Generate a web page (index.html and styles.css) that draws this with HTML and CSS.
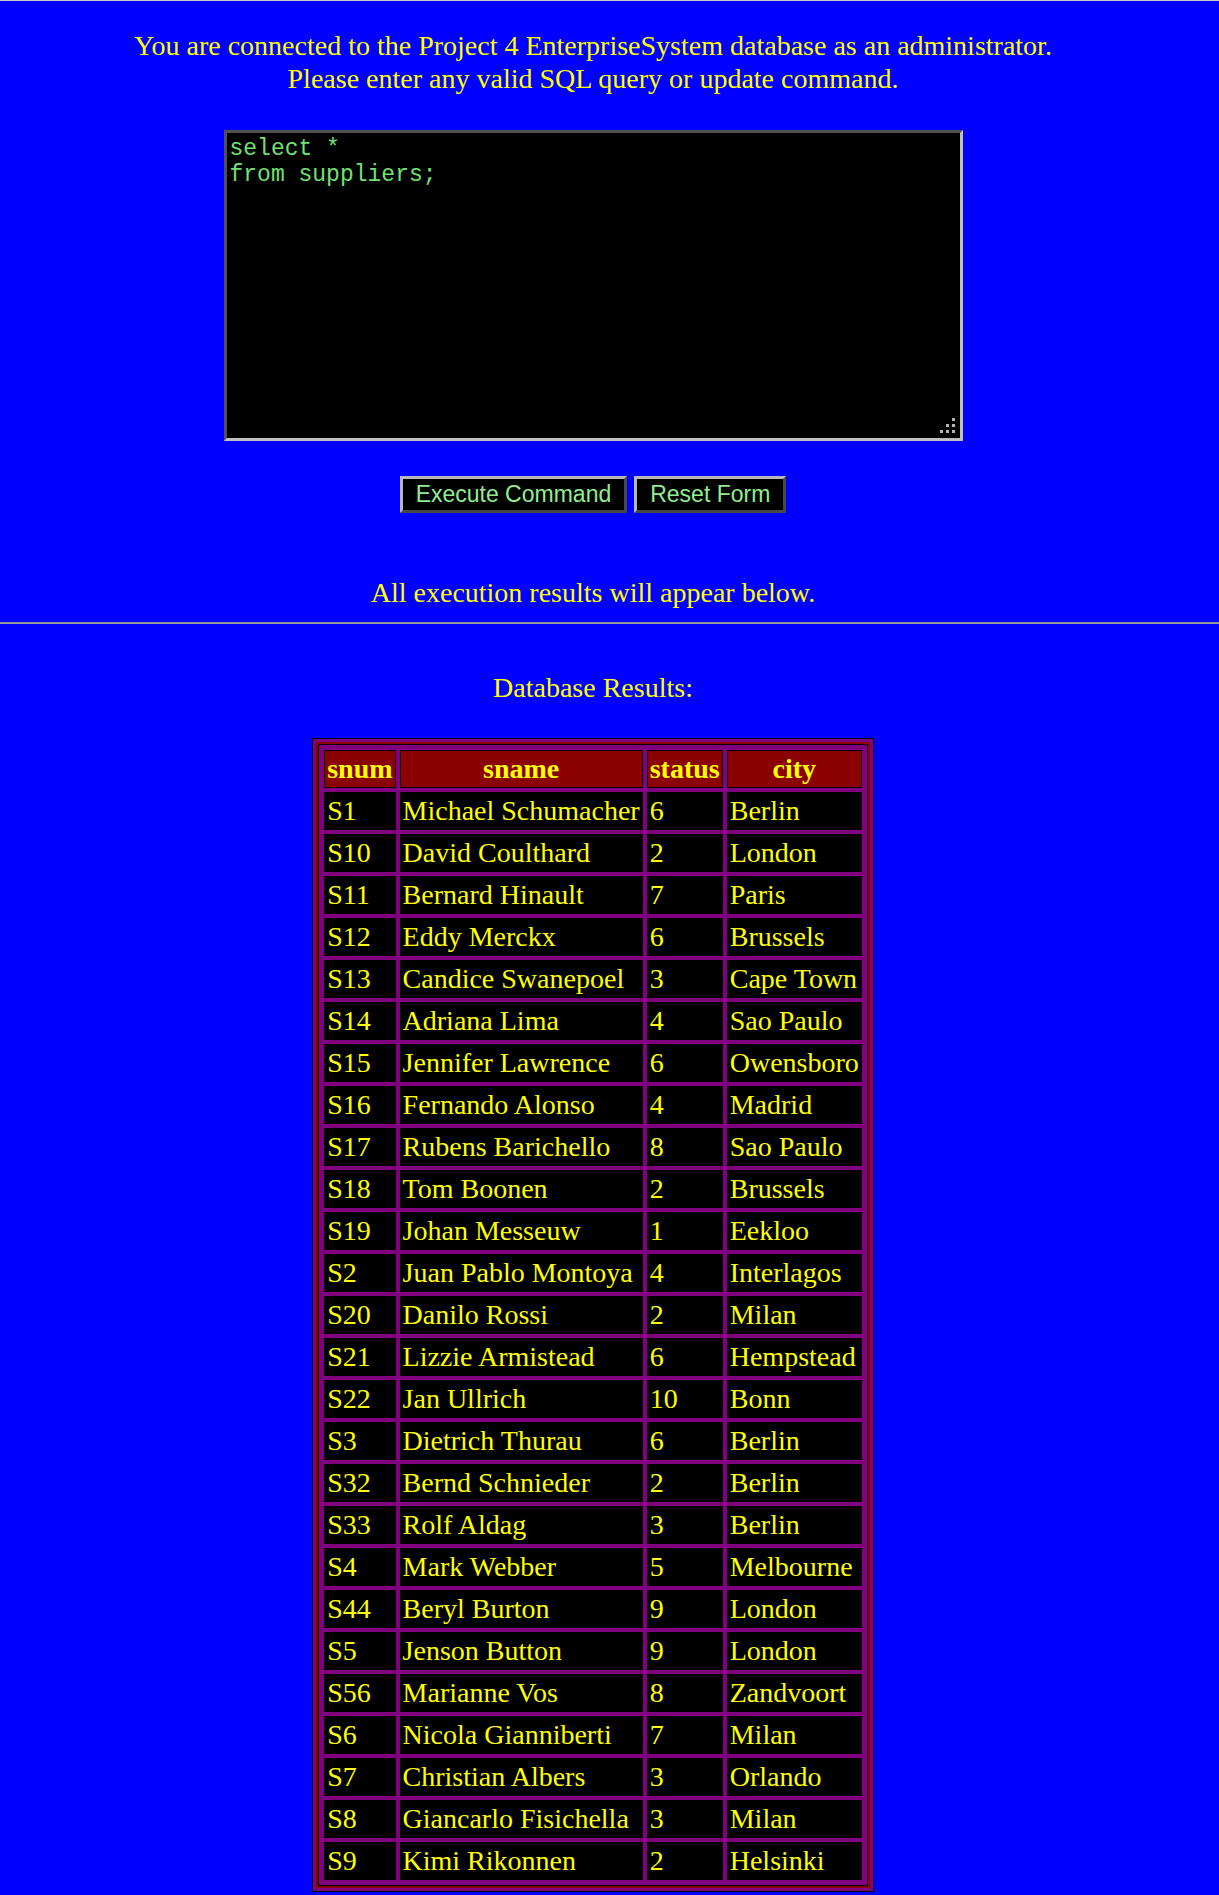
FILE: index.html
```html
<!DOCTYPE html>
<html lang="en">
<head>
<meta charset="utf-8">
<title>Project 4 EnterpriseSystem</title>
<link rel="stylesheet" href="styles.css">
</head>
<body>
<div class="main">
  <p class="intro">You are connected to the Project 4 EnterpriseSystem database as an administrator.<br>Please enter any valid SQL query or update command.</p>
  <form class="query-form">
    <div class="editor">
      <textarea class="sql" spellcheck="false">select *
from suppliers;</textarea>
      <svg class="grip" width="16" height="15" viewBox="0 0 16 15" aria-hidden="true">
        <rect x="12" y="0" width="3" height="3" fill="#b4b4b4"/>
        <rect x="6" y="6" width="3" height="3" fill="#b4b4b4"/>
        <rect x="12" y="6" width="3" height="3" fill="#b4b4b4"/>
        <rect x="0" y="12" width="3" height="3" fill="#b4b4b4"/>
        <rect x="6" y="12" width="3" height="3" fill="#b4b4b4"/>
        <rect x="12" y="12" width="3" height="3" fill="#b4b4b4"/>
      </svg>
    </div>
    <div class="actions">
      <button type="button" class="btn">Execute Command</button>
      <button type="reset" class="btn">Reset Form</button>
    </div>
  </form>
  <p class="note">All execution results will appear below.</p>
</div>
<hr class="divider">
<div class="main">
  <p class="results-title">Database Results:</p>
  <table class="results">
    <thead>
      <tr><th>snum</th><th>sname</th><th>status</th><th>city</th></tr>
    </thead>
    <tbody>
      <tr><td>S1</td><td>Michael Schumacher</td><td>6</td><td>Berlin</td></tr>
      <tr><td>S10</td><td>David Coulthard</td><td>2</td><td>London</td></tr>
      <tr><td>S11</td><td>Bernard Hinault</td><td>7</td><td>Paris</td></tr>
      <tr><td>S12</td><td>Eddy Merckx</td><td>6</td><td>Brussels</td></tr>
      <tr><td>S13</td><td>Candice Swanepoel</td><td>3</td><td>Cape Town</td></tr>
      <tr><td>S14</td><td>Adriana Lima</td><td>4</td><td>Sao Paulo</td></tr>
      <tr><td>S15</td><td>Jennifer Lawrence</td><td>6</td><td>Owensboro</td></tr>
      <tr><td>S16</td><td>Fernando Alonso</td><td>4</td><td>Madrid</td></tr>
      <tr><td>S17</td><td>Rubens Barichello</td><td>8</td><td>Sao Paulo</td></tr>
      <tr><td>S18</td><td>Tom Boonen</td><td>2</td><td>Brussels</td></tr>
      <tr><td>S19</td><td>Johan Messeuw</td><td>1</td><td>Eekloo</td></tr>
      <tr><td>S2</td><td>Juan Pablo Montoya</td><td>4</td><td>Interlagos</td></tr>
      <tr><td>S20</td><td>Danilo Rossi</td><td>2</td><td>Milan</td></tr>
      <tr><td>S21</td><td>Lizzie Armistead</td><td>6</td><td>Hempstead</td></tr>
      <tr><td>S22</td><td>Jan Ullrich</td><td>10</td><td>Bonn</td></tr>
      <tr><td>S3</td><td>Dietrich Thurau</td><td>6</td><td>Berlin</td></tr>
      <tr><td>S32</td><td>Bernd Schnieder</td><td>2</td><td>Berlin</td></tr>
      <tr><td>S33</td><td>Rolf Aldag</td><td>3</td><td>Berlin</td></tr>
      <tr><td>S4</td><td>Mark Webber</td><td>5</td><td>Melbourne</td></tr>
      <tr><td>S44</td><td>Beryl Burton</td><td>9</td><td>London</td></tr>
      <tr><td>S5</td><td>Jenson Button</td><td>9</td><td>London</td></tr>
      <tr><td>S56</td><td>Marianne Vos</td><td>8</td><td>Zandvoort</td></tr>
      <tr><td>S6</td><td>Nicola Gianniberti</td><td>7</td><td>Milan</td></tr>
      <tr><td>S7</td><td>Christian Albers</td><td>3</td><td>Orlando</td></tr>
      <tr><td>S8</td><td>Giancarlo Fisichella</td><td>3</td><td>Milan</td></tr>
      <tr><td>S9</td><td>Kimi Rikonnen</td><td>2</td><td>Helsinki</td></tr>
    </tbody>
  </table>
</div>
</body>
</html>
```
FILE: styles.css
```css
html, body {
  margin: 0;
  padding: 0;
}

body {
  background: #0000ff;
  color: #ffff00;
  font-family: "Liberation Serif", "Times New Roman", serif;
  font-size: 28px;
  border-top: 1px solid #c8c8c8;
}

.main {
  width: 1186px;
  text-align: center;
}

.intro {
  margin: 28px 0 0;
  line-height: 33px;
}

.query-form {
  margin: 0;
}

.editor {
  position: relative;
  width: 739px;
  margin: 35px auto 0;
}

.sql {
  display: block;
  box-sizing: border-box;
  width: 739px;
  height: 311px;
  margin: 0;
  padding: 3px;
  background: #000;
  color: #72e072;
  font-family: "Liberation Mono", "Courier New", monospace;
  font-size: 23px;
  line-height: normal;
  border-style: solid;
  border-width: 3px;
  border-color: #505050 #c0c0c0 #c0c0c0 #505050;
  resize: none;
  outline: none;
  overflow: hidden;
}

.grip {
  position: absolute;
  right: 7px;
  bottom: 8px;
  display: block;
}

.actions {
  display: flex;
  justify-content: center;
  gap: 7px;
  margin-top: 35px;
}

.btn {
  box-sizing: border-box;
  height: 37px;
  margin: 0;
  padding: 2px 13px;
  background: #000;
  color: #90ee90;
  font-family: "Liberation Sans", Arial, sans-serif;
  font-size: 23px;
  line-height: normal;
  border-style: solid;
  border-width: 3px;
  border-color: #b8b8b8 #484848 #484848 #b8b8b8;
  cursor: pointer;
}

.note {
  margin: 63px 0 0;
  line-height: 33px;
}

.divider {
  margin: 13px 0 0;
  height: 0;
  border: 0;
  border-top: 1px solid #8a8a8a;
  border-bottom: 1px solid #a0a0a0;
}

.results-title {
  margin: 47px 0 0;
  line-height: 33px;
}

.results {
  margin: 34px auto 0;
  border: 1px solid #000;
  border-collapse: separate;
  border-spacing: 4px;
  padding: 7px;
  background: #800080;
  box-shadow: inset 0 0 0 3px #800080, inset 0 0 0 5px #8b0000, inset 0 0 0 6px #000;
}

.results th,
.results td {
  border: 1px solid #000;
  padding: 2px;
  color: #ffff00;
  line-height: normal;
  white-space: nowrap;
}

.results th {
  background: #8b0000;
  font-weight: bold;
  text-align: center;
}

.results td {
  background: #000;
  text-align: left;
}
```
